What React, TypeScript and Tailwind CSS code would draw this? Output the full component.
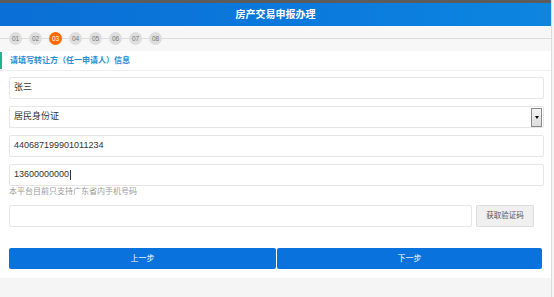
const font = { fontFamily: '"Liberation Sans", "Noto Sans CJK SC", sans-serif' };

const steps = ['01', '02', '03', '04', '05', '06', '07', '08'];

function Field({ value, caret }: { value: string; caret?: boolean }) {
  return (
    <div className="h-[22px] w-[535px] border border-[#e6e6e6] rounded-[2px] bg-white flex items-center pl-[4px] text-[9px] text-[#333]">
      {value}
      {caret && <span className="inline-block w-px h-[10px] bg-[#333] ml-px" />}
    </div>
  );
}

export default function App() {
  return (
    <div className="w-[554px] h-[297px] bg-[#f5f5f5] overflow-hidden" style={font}>
      <div className="w-[552px] border-r border-[#dcdcdc] h-full flex flex-col">
        <div className="h-[3px] bg-[#5c5c5c]" />
        <header className="h-[23px] flex items-center justify-center bg-gradient-to-r from-[#0a6fd6] via-[#0b78dc] to-[#0d86e0] text-white text-[10px] font-bold">
          房产交易申报办理
        </header>

        <div className="h-[25px] bg-[#f7f7f7] relative flex items-center">
          <div className="absolute left-0 right-0 top-[12px] h-px bg-[#dddddd]" />
          <div className="relative flex gap-[7px] pl-[9px]">
            {steps.map((s) => (
              <div
                key={s}
                className={
                  s === '03'
                    ? 'w-[13px] h-[13px] rounded-full bg-[#ff6a00] text-white text-[6.5px] flex items-center justify-center'
                    : 'w-[13px] h-[13px] rounded-full bg-[#dedede] text-[#777] text-[6.5px] flex items-center justify-center'
                }
              >
                {s}
              </div>
            ))}
          </div>
        </div>

        <main className="bg-white h-[227px] flex flex-col">
          <div className="h-[20px] flex items-center border-b border-[#eeeeee] relative">
            <div className="absolute left-0 top-[1px] bottom-[1px] w-[2px] bg-[#1fb58f]" />
            <span className="pl-[10px] text-[8px] font-bold text-[#2b8fd6]">请填写转让方（任一申请人）信息</span>
          </div>

          <div className="pl-[9px] pt-[6px] flex flex-col gap-[7px]">
            <Field value="张三" />
            <div className="h-[22px] w-[535px] border border-[#e6e6e6] rounded-[2px] bg-white flex items-center justify-between pl-[4px] pr-[1px] text-[9px] text-[#333]">
              居民身份证
              <div className="w-[11px] h-[19px] border border-[#8a8a8a] bg-gradient-to-b from-[#f4f4f4] to-[#dcdcdc] flex items-center justify-center">
                <div className="w-0 h-0 border-l-[2.5px] border-r-[2.5px] border-t-[3px] border-l-transparent border-r-transparent border-t-black" />
              </div>
            </div>
            <Field value="440687199901011234" />
            <div className="flex flex-col">
              <Field value="13600000000" caret />
              <span className="text-[8px] text-[#9a9a9a] leading-[10px] mt-[1px]">本平台目前只支持广东省内手机号码</span>
            </div>
          </div>

          <div className="pl-[9px] mt-[8px] flex gap-[4px]">
            <div className="h-[22px] w-[463px] border border-[#e6e6e6] rounded-[2px] bg-white" />
            <button className="h-[22px] w-[58px] border border-[#dddddd] bg-[#f0f0f0] text-[7.5px] text-[#555] rounded-[1px]">
              获取验证码
            </button>
          </div>

          <div className="pl-[9px] mt-[21px] flex gap-px">
            <button className="h-[21px] w-[267px] bg-[#0a72dc] rounded-[2px] text-white text-[8px]">上一步</button>
            <button className="h-[21px] w-[265px] bg-[#0a72dc] rounded-[2px] text-white text-[8px]">下一步</button>
          </div>
        </main>
      </div>
    </div>
  );
}
